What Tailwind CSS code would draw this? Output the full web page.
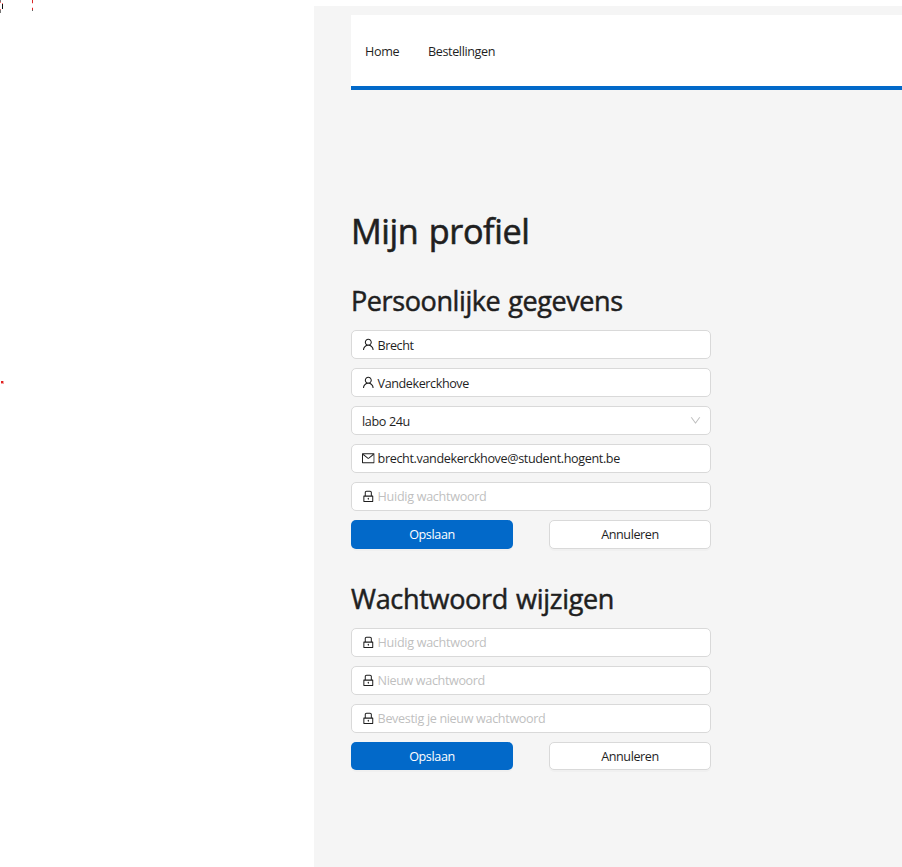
<!DOCTYPE html>
<html lang="nl">
<head>
<meta charset="utf-8">
<title>Mijn profiel</title>
<script src="https://cdn.jsdelivr.net/npm/@tailwindcss/browser@4"></script>
</head>
<body class="relative h-[867px] w-[902px] overflow-hidden bg-white pt-[6px] pl-[314px] font-['Segoe_UI','Open_Sans',sans-serif] text-[12.6px] leading-[20px] text-[#1f1f1f]">
<svg class="hidden">
<symbol id="user" viewBox="64 64 896 896"><path d="M858.5 763.6a374 374 0 00-80.6-119.5 375.63 375.63 0 00-119.5-80.6c-.4-.2-.8-.3-1.2-.5C719.5 518 760 444.7 760 362c0-137-111-248-248-248S264 225 264 362c0 82.7 40.5 156 102.8 201.1-.4.2-.8.3-1.2.5-44.8 18.9-85 46-119.5 80.6a375.63 375.63 0 00-80.6 119.5A371.7 371.7 0 00136 901.8a8 8 0 008 8.2h60c4.4 0 7.9-3.5 8-7.8 2-77.2 33-149.5 87.8-204.3 56.7-56.7 132-87.9 212.2-87.9s155.5 31.2 212.2 87.9C779 752.7 810 825 812 902.2c.1 4.4 3.6 7.8 8 7.8h60a8 8 0 008-8.2c-1-47.8-10.9-94.3-29.5-138.2zM512 534c-45.9 0-89.1-17.9-121.6-50.4S340 407.9 340 362c0-45.9 17.9-89.1 50.4-121.6S466.1 190 512 190s89.1 17.9 121.6 50.4S684 316.1 684 362c0 45.9-17.9 89.1-50.4 121.6S557.9 534 512 534z"/></symbol>
<symbol id="mail" viewBox="64 64 896 896"><path d="M928 160H96c-17.7 0-32 14.3-32 32v640c0 17.7 14.3 32 32 32h832c17.7 0 32-14.3 32-32V192c0-17.7-14.3-32-32-32zm-40 110.8V792H136V270.8l-27.6-21.5 39.3-50.5 42.8 33.3h643.1l42.8-33.3 39.3 50.5-27.7 21.5zM833.6 232L512 482 190.4 232l-42.8-33.3-39.3 50.5 27.6 21.5 341.6 265.6a55.99 55.99 0 0068.7 0L888 270.8l27.6-21.5-39.3-50.5-42.7 33.2z"/></symbol>
<symbol id="lock" viewBox="64 64 896 896"><path d="M832 464h-68V240c0-70.7-57.3-128-128-128H388c-70.7 0-128 57.3-128 128v224h-68c-17.7 0-32 14.3-32 32v384c0 17.7 14.3 32 32 32h640c17.7 0 32-14.3 32-32V496c0-17.7-14.3-32-32-32zM332 240c0-30.9 25.1-56 56-56h248c30.9 0 56 25.1 56 56v224H332V240zm460 600H232V536h560v304zM484 701v53c0 4.4 3.6 8 8 8h40c4.4 0 8-3.6 8-8v-53a48.01 48.01 0 10-56 0z"/></symbol>
<symbol id="down" viewBox="64 64 896 896"><path d="M884 256h-75c-5.1 0-9.9 2.5-12.9 6.6L512 654.2 227.9 262.6c-3-4.1-7.8-6.6-12.9-6.6h-75c-6.5 0-10.3 7.4-6.5 12.7l352.6 486.1c12.8 17.6 39 17.6 51.7 0l352.6-486.1c3.9-5.3.1-12.7-6.4-12.7z"/></symbol>
</svg>
<!-- red marks at the left edge -->
<svg class="absolute top-0 left-0" width="40" height="400" shape-rendering="crispEdges">
<path fill="#767676" d="M0 0h1v2h-1zM0 10h1v3h-1z"/><path fill="#ff6b6b" d="M0 2h1v1h-1zM0 9h1v1h-1zM2 3h1v1h-1z"/><path fill="#111" d="M2 4h1v5h-1z"/>
<path fill="#d92626" d="M32 0h1v3h-1zM32 8h1v2h-1z"/><path fill="#ffc4c4" d="M32 3h1v1h-1zM32 7h1v1h-1z"/><path fill="#666" d="M32 10h1v1h-1z"/>
<path fill="#f4a3a3" d="M1 381h3v3h-3z"/><path fill="#e02020" d="M1 381h2v2h-2z"/>
</svg>
<div class="h-[861px] bg-[#f5f5f5] pt-[9px] pl-[37px]">
  <nav class="flex h-[75px] items-start gap-[29px] border-b-4 border-[#0269c9] bg-white pt-[27px] pl-[14px]">
    <a class="w-[34px] whitespace-nowrap tracking-[-0.36px]">Home</a>
    <a class="whitespace-nowrap tracking-[-0.38px]">Bestellingen</a>
  </nav>
  <main class="w-[360px] pt-[117px]">
    <h1 class="h-[48px] text-[34.2px] leading-[48px] tracking-[-0.4px] [word-spacing:2px] whitespace-nowrap [-webkit-text-stroke:0.6px_#1f1f1f]">Mijn profiel</h1>
    <h2 class="mt-[27px] h-[36px] pt-px text-[27px] leading-[36px] tracking-[-0.4px] [word-spacing:1.2px] whitespace-nowrap [-webkit-text-stroke:0.5px_#1f1f1f]">Persoonlijke gegevens</h2>
    <form class="mt-[12px] flex flex-col gap-[9px]">
      <div class="flex h-[29px] items-center gap-[3px] rounded-[5px] border border-[#d9d9d9] bg-white px-[10px]"><svg class="size-[12.6px] fill-[#1f1f1f]"><use href="#user"/></svg><span class="pt-[2px] tracking-[-0.45px]">Brecht</span></div>
      <div class="flex h-[29px] items-center gap-[3px] rounded-[5px] border border-[#d9d9d9] bg-white px-[10px]"><svg class="size-[12.6px] fill-[#1f1f1f]"><use href="#user"/></svg><span class="pt-[2px] tracking-[-0.42px]">Vandekerckhove</span></div>
      <div class="flex h-[29px] items-center justify-between rounded-[5px] border border-[#d9d9d9] bg-white pr-[9px] pl-[10px]"><span class="pt-[2px] tracking-[-0.36px]">labo 24u</span><svg class="size-[11px] fill-[#bfbfbf]"><use href="#down"/></svg></div>
      <div class="flex h-[29px] items-center gap-[3px] rounded-[5px] border border-[#d9d9d9] bg-white px-[10px]"><svg class="size-[12.6px] fill-[#1f1f1f]"><use href="#mail"/></svg><span class="tracking-[-0.37px]">brecht.vandekerckhove@student.hogent.be</span></div>
      <div class="flex h-[29px] items-center gap-[3px] rounded-[5px] border border-[#d9d9d9] bg-white px-[10px]"><svg class="size-[12.6px] fill-[#1f1f1f]"><use href="#lock"/></svg><span class="tracking-[-0.3px] text-[#bfbfbf]">Huidig wachtwoord</span></div>
      <div class="flex justify-between">
        <button type="button" class="h-[29px] w-[162px] rounded-[5px] bg-[#0269c9] tracking-[-0.38px] text-white shadow-[0_2px_0_rgba(0,0,0,0.02)]">Opslaan</button>
        <button type="button" class="h-[29px] w-[162px] rounded-[5px] border border-[#d9d9d9] bg-white tracking-[-0.4px] shadow-[0_2px_0_rgba(0,0,0,0.02)]">Annuleren</button>
      </div>
    </form>
    <h2 class="mt-[31px] h-[36px] pt-px text-[27px] leading-[36px] tracking-[-0.3px] [word-spacing:1.4px] whitespace-nowrap [-webkit-text-stroke:0.5px_#1f1f1f]">Wachtwoord wijzigen</h2>
    <form class="mt-[12px] flex flex-col gap-[9px]">
      <div class="flex h-[29px] items-center gap-[3px] rounded-[5px] border border-[#d9d9d9] bg-white px-[10px]"><svg class="size-[12.6px] fill-[#1f1f1f]"><use href="#lock"/></svg><span class="tracking-[-0.3px] text-[#bfbfbf]">Huidig wachtwoord</span></div>
      <div class="flex h-[29px] items-center gap-[3px] rounded-[5px] border border-[#d9d9d9] bg-white px-[10px]"><svg class="size-[12.6px] fill-[#1f1f1f]"><use href="#lock"/></svg><span class="tracking-[-0.37px] text-[#bfbfbf]">Nieuw wachtwoord</span></div>
      <div class="flex h-[29px] items-center gap-[3px] rounded-[5px] border border-[#d9d9d9] bg-white px-[10px]"><svg class="size-[12.6px] fill-[#1f1f1f]"><use href="#lock"/></svg><span class="tracking-[-0.34px] text-[#bfbfbf]">Bevestig je nieuw wachtwoord</span></div>
      <div class="flex justify-between">
        <button type="button" class="h-[28px] w-[162px] rounded-[5px] bg-[#0269c9] pt-px tracking-[-0.38px] text-white shadow-[0_2px_0_rgba(0,0,0,0.02)]">Opslaan</button>
        <button type="button" class="h-[28px] w-[162px] rounded-[5px] border border-[#d9d9d9] bg-white pt-px tracking-[-0.4px] shadow-[0_2px_0_rgba(0,0,0,0.02)]">Annuleren</button>
      </div>
    </form>
  </main>
</div>
</body>
</html>
